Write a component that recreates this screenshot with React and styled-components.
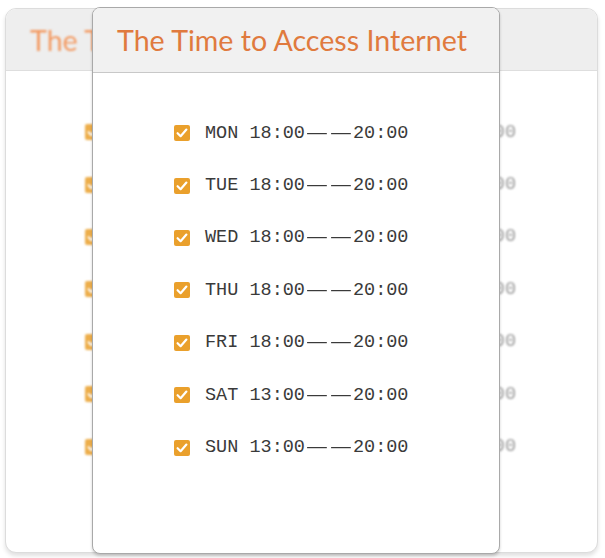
import React from "react";
import styled, { createGlobalStyle } from "styled-components";

const Global = createGlobalStyle`
  body {
    margin: 0;
    background: #fff;
  }
`;

const Page = styled.div`
  position: relative;
  width: 605px;
  height: 558px;
  padding: 8px 7px 5px 5px;
  box-sizing: border-box;
`;

const Card = styled.div`
  display: flex;
  flex-direction: column;
  box-sizing: border-box;
  height: 100%;
  background: #fff;
  border: 1px solid ${(p) => (p.front ? "#a9a9a9" : "#dcdcdc")};
  border-radius: ${(p) => (p.front ? "8px" : "11px")};
  box-shadow: ${(p) =>
    p.front ? "0 2px 3px rgba(0,0,0,0.18)" : "0 3px 4px rgba(0,0,0,0.12)"};
  overflow: hidden;
`;

/* the dialog sits on top of the page card */
const Modal = styled.div`
  position: absolute;
  left: 92px;
  top: 7px;
  width: 408px;
  height: 547px;
`;

const Header = styled.div`
  display: flex;
  align-items: center;
  height: ${(p) => (p.front ? "64px" : "61px")};
  flex: none;
  padding-left: 24px;
  background: ${(p) => (p.front ? "#f1f1f1" : "#eeeeee")};
  border-bottom: 1px solid ${(p) => (p.front ? "#c8c8c8" : "#dedede")};
`;

const Title = styled.h1`
  margin: 0;
  font-family: Lato, "Open Sans", sans-serif;
  font-weight: 400;
  font-size: 28.6px;
  color: ${(p) => (p.front ? "#e07a3e" : "#f39a62")};
  white-space: nowrap;
  filter: ${(p) => (p.front ? "none" : "blur(1px)")};
`;

const List = styled.ul`
  list-style: none;
  margin: 0;
  padding: ${(p) => (p.front ? "34px 0 0 81px" : "35px 81px 0 79px")};
  display: flex;
  flex-direction: column;
  filter: ${(p) => (p.front ? "none" : "blur(1.2px)")};
`;

const Row = styled.li`
  display: flex;
  align-items: center;
  justify-content: ${(p) => (p.front ? "flex-start" : "space-between")};
  gap: 15px;
  height: 52.4px;
`;

const Box = styled.svg`
  flex: none;
  width: 16px;
  height: 16px;
  opacity: ${(p) => (p.front ? 1 : 0.85)};
`;

const Label = styled.span`
  font-family: "Liberation Mono", "DejaVu Sans Mono", monospace;
  font-size: 18.5px;
  color: ${(p) => (p.front ? "#3a3a3a" : "#9a9a9a")};
  white-space: nowrap;
  display: flex;
  align-items: center;
`;

const Dash = styled.span`
  display: inline-block;
  width: 24px;
  overflow: hidden;
  text-align: center;
  transform: scaleX(1.75);
`;

const schedule = [
  ["MON", "18:00"],
  ["TUE", "18:00"],
  ["WED", "18:00"],
  ["THU", "18:00"],
  ["FRI", "18:00"],
  ["SAT", "13:00"],
  ["SUN", "13:00"],
];

const Check = ({ front }) => (
  <Box front={front} viewBox="0 0 16 16">
    <rect x="0" y="0" width="16" height="16" rx="2" fill="#eaa02c" />
    <path
      d="M3.6 8.2 L6.6 11.2 L12.4 4.6"
      fill="none"
      stroke="#fff"
      strokeWidth="2.2"
      strokeLinecap="round"
      strokeLinejoin="round"
    />
  </Box>
);

const Schedule = ({ front }) => (
  <List front={front}>
    {schedule.map(([day, from]) => (
      <Row key={day} front={front}>
        <Check front={front} />
        <Label front={front}>
          {day} {from}
          <Dash>—</Dash>
          <Dash>—</Dash>
          20:00
        </Label>
      </Row>
    ))}
  </List>
);

const App = () => (
  <Page>
    <Global />
    <Card>
      <Header>
        <Title>The Time to Access Internet</Title>
      </Header>
      <Schedule />
    </Card>
    <Modal>
      <Card front>
        <Header front>
          <Title front>The Time to Access Internet</Title>
        </Header>
        <Schedule front />
      </Card>
    </Modal>
  </Page>
);

export default App;
